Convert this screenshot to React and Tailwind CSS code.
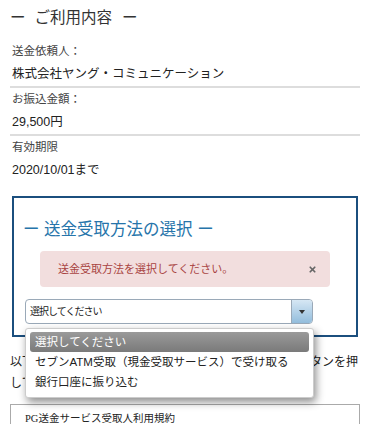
import { X } from 'lucide-react';

const jp = { fontFamily: '"Liberation Sans", "Noto Sans CJK JP", sans-serif' };

function Item({ label, value, last }) {
  return (
    <div className={last ? '' : 'border-b-2 border-[#dddddd]'}>
      <div className="pl-[2px] text-[11.5px] leading-[22px] text-[#444]">{label}</div>
      <div className="pl-[2px] text-[12.5px] leading-[24px] text-[#222]">{value}</div>
    </div>
  );
}

export default function App() {
  return (
    <div className="w-[370px] h-[424px] overflow-hidden bg-white px-[10px]" style={jp}>
      <div className="mt-1 mb-2 flex text-[15.5px] leading-[28px] text-[#333]">
        <span>ー</span>
        <span className="ml-[9px]">ご利用内容</span>
        <span className="ml-[10px]">ー</span>
      </div>

      <Item label="送金依頼人：" value="株式会社ヤング・コミュニケーション" />
      <Item label="お振込金額：" value="29,500円" />
      <Item label="有効期限" value="2020/10/01まで" last />

      <div className="mt-[14px] mx-[2px] border-2 border-[#1b4f7e] pt-[17px] pb-[11px] px-[11px]">
        <div className="-ml-[2px] text-[16.5px] leading-[28px] text-[#2674aa]">ー 送金受取方法の選択 ー</div>
        <div className="mt-2 mx-[15px] h-[36px] rounded bg-[#f2dede] flex items-center justify-between pl-[18px] pr-[13px]">
          <span className="text-[11px] text-[#a94442]">送金受取方法を選択してください。</span>
          <X size={9} strokeWidth={4.5} className="text-[#666]" />
        </div>
        <div className="relative mt-[12px] w-[288px]">
          <div className="h-[25px] flex items-stretch rounded border border-[#9aa9b8] bg-white">
            <div className="flex-1 flex items-center pl-[4px] text-[10px] tracking-[-1px] text-[#222]">選択してください</div>
            <div className="w-[21px] flex items-center justify-center rounded-r-[3px] border-l border-[#9aa9b8] bg-gradient-to-b from-[#d6e7f4] to-[#93bddc]">
              <div className="w-0 h-0 border-l-[3px] border-r-[3px] border-t-[4px] border-l-transparent border-r-transparent border-t-[#333]" />
            </div>
          </div>
          <div className="absolute z-10 left-0 top-[29px] w-[289px] h-[70px] bg-white rounded-[3px] border border-[#ccc] shadow-[2px_4px_8px_rgba(0,0,0,0.45)] pt-[3px] px-[4px]">
            <div className="h-[20px] rounded-[3px] bg-gradient-to-b from-[#9a9a9a] to-[#7a7a7a] pl-[5px] text-[11.5px] leading-[20px] text-white">選択してください</div>
            <div className="pl-[5px] whitespace-nowrap text-[11.5px] leading-[20px] text-[#222]">セブンATM受取（現金受取サービス）で受け取る</div>
            <div className="pl-[5px] whitespace-nowrap text-[11.5px] leading-[20px] text-[#222]">銀行口座に振り込む</div>
          </div>
        </div>
      </div>

      <div className="mt-[15px] text-[12px] leading-[21px] text-[#222]">
        以下の利用規約をご確認のうえ、同意される方は同意ボタンを押してください。
      </div>

      <div className="mt-[10px] h-[60px] border border-[#aaa] pl-[14px] pt-[6px]">
        <div className="text-[10.5px] text-[#222]" style={{ fontFamily: '"Liberation Serif", "Noto Sans CJK JP", serif' }}>
          PG送金サービス受取人利用規約
        </div>
      </div>
    </div>
  );
}
